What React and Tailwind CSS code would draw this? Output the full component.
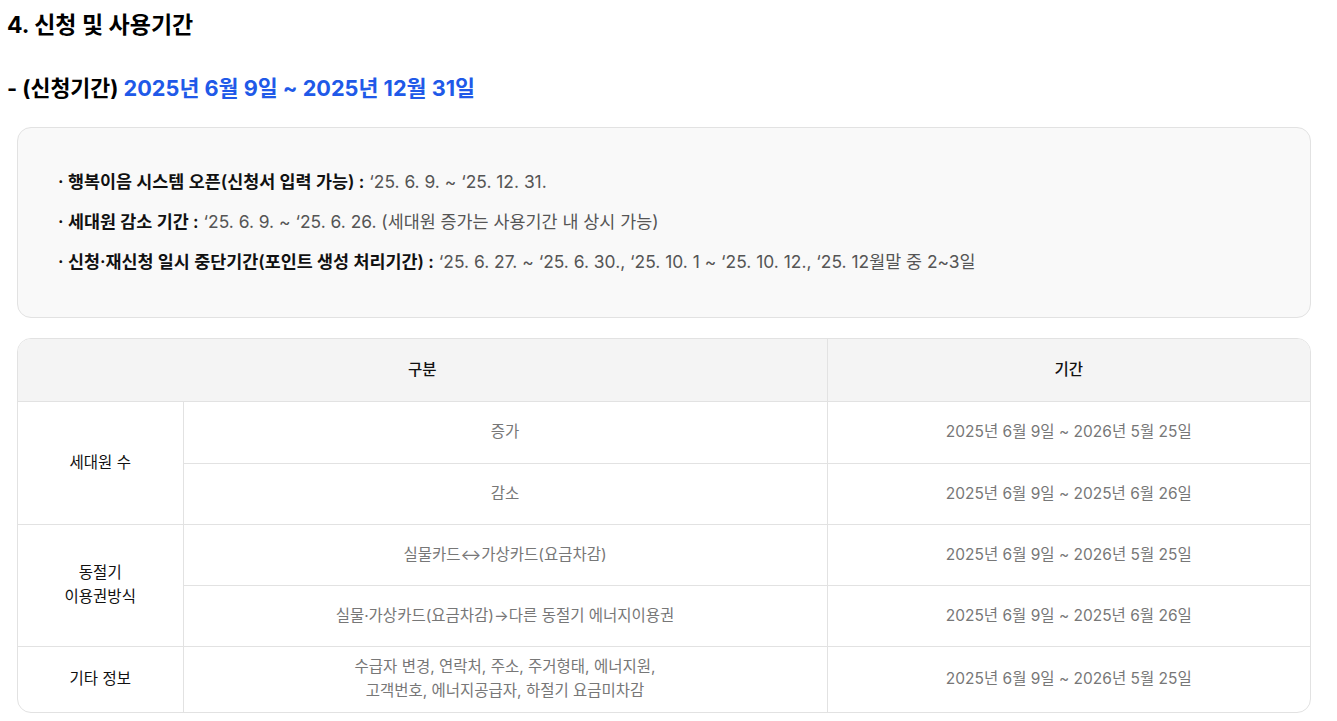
import React from 'react';

const FONT = { fontFamily: 'Inter, "Noto Sans CJK KR", sans-serif' };

const notices = [
    { label: '행복이음 시스템 오픈(신청서 입력 가능) :', value: '‘25. 6. 9. ~ ‘25. 12. 31.' },
    { label: '세대원 감소 기간 :', value: '‘25. 6. 9. ~ ‘25. 6. 26. (세대원 증가는 사용기간 내 상시 가능)' },
    {
        label: '신청·재신청 일시 중단기간(포인트 생성 처리기간) :',
        value: '‘25. 6. 27. ~ ‘25. 6. 30., ‘25. 10. 1 ~ ‘25. 10. 12., ‘25. 12월말 중 2~3일',
    },
];

const groups = [
    {
        name: ['세대원 수'],
        rows: [
            { item: ['증가'], period: '2025년 6월 9일 ~ 2026년 5월 25일', h: 'h-[62px]' },
            { item: ['감소'], period: '2025년 6월 9일 ~ 2025년 6월 26일', h: 'h-[61px]' },
        ],
    },
    {
        name: ['동절기', '이용권방식'],
        rows: [
            { item: ['실물카드↔가상카드(요금차감)'], period: '2025년 6월 9일 ~ 2026년 5월 25일', h: 'h-[61px]' },
            { item: ['실물·가상카드(요금차감)→다른 동절기 에너지이용권'], period: '2025년 6월 9일 ~ 2025년 6월 26일', h: 'h-[61px]' },
        ],
    },
    {
        name: ['기타 정보'],
        rows: [
            {
                item: ['수급자 변경, 연락처, 주소, 주거형태, 에너지원,', '고객번호, 에너지공급자, 하절기 요금미차감'],
                period: '2025년 6월 9일 ~ 2026년 5월 25일',
                h: 'h-[66px]',
            },
        ],
    },
];

const Lines = ({ lines }) => lines.map((l, i) => <div key={i}>{l}</div>);

const App = () => {
    return (
        <div className="bg-white min-h-screen px-[7px] pt-[9px] pb-2 text-black" style={FONT}>
            <h2 className="text-[23px] leading-[32px] font-bold">4. 신청 및 사용기간</h2>
            <h3 className="mt-[32px] text-[21.7px] leading-[30px] font-bold">
                - (신청기간) <span className="text-[#2059e8]">2025년 6월 9일 ~ 2025년 12월 31일</span>
            </h3>

            <div className="ml-[10px] mr-[19px] mt-[24px]">
                <div className="rounded-[14px] border border-[#e2e2e2] bg-[#f9f9f9] pl-[40px] pt-[42px] pb-[43px] flex flex-col gap-[16px]">
                    {notices.map(n => (
                        <p key={n.label} className="text-[17.4px] leading-[24px]">
                            <span className="font-semibold text-[#111]">· {n.label}</span>{' '}
                            <span className="text-[#555]">{n.value}</span>
                        </p>
                    ))}
                </div>

                <div className="mt-[20px] rounded-[14px] border border-[#e2e2e2] overflow-hidden">
                    <table className="w-full border-collapse text-[15.5px] leading-[24px] table-fixed">
                        <colgroup>
                            <col className="w-[165px]" />
                            <col className="w-[644px]" />
                            <col />
                        </colgroup>
                        <thead>
                            <tr className="bg-[#f4f4f4] h-[62px]">
                                <th colSpan={2} className="font-medium text-[#111] border-b border-r border-[#e2e2e2]">구분</th>
                                <th className="font-medium text-[#111] border-b border-[#e2e2e2]">기간</th>
                            </tr>
                        </thead>
                        <tbody>
                            {groups.map((g, gi) =>
                                g.rows.map((r, ri) => {
                                    const lastGroup = gi === groups.length - 1;
                                    const last = lastGroup && ri === g.rows.length - 1;
                                    const bb = last ? '' : 'border-b';
                                    return (
                                        <tr key={`${gi}-${ri}`} className={r.h}>
                                            {ri === 0 && (
                                                <td
                                                    rowSpan={g.rows.length}
                                                    className={`text-center text-[#111] border-r border-[#e2e2e2] ${lastGroup ? '' : 'border-b'}`}
                                                >
                                                    <Lines lines={g.name} />
                                                </td>
                                            )}
                                            <td className={`text-center text-[#777] border-r border-[#e2e2e2] ${bb}`}>
                                                <Lines lines={r.item} />
                                            </td>
                                            <td className={`text-center text-[#777] border-[#e2e2e2] ${bb}`}>{r.period}</td>
                                        </tr>
                                    );
                                })
                            )}
                        </tbody>
                    </table>
                </div>
            </div>
        </div>
    );
};

export default App;
